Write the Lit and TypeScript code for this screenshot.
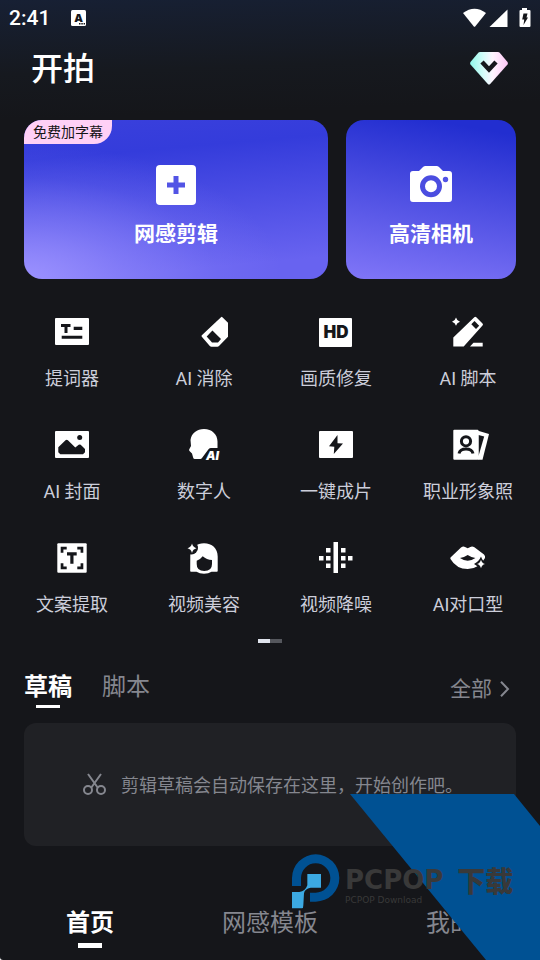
import { LitElement, html, css, svg } from "lit";
import { customElement, state } from "lit/decorators.js";
import { classMap } from "lit/directives/class-map.js";

const tools = [
  {
    label: "提词器",
    icon: svg`<rect x="1" y="4" width="34" height="27" rx="1"/>
      <path class="cut" d="M7 10h9.5v3h-3v6h-3v-6H7zM19.7 12.7h8.6V16h-8.6zM7.7 21.7h20.6v3H7.7z"/>`,
  },
  {
    label: "AI 消除",
    icon: svg`<path d="M35 3.2q.7-.7 1.4 0L42 8.7v14L33 32q-.7.7-1.6.7h-6q-.9 0-1.6-.7l-8-9.2q-.6-.8 0-1.6z"/>
      <path class="cut" d="M20.7 22.4l5.7-5.9 8.6 8.6-3 3.5h-6z"/>`,
  },
  {
    label: "画质修复",
    icon: svg`<rect x="1" y="4" width="33" height="29" rx="1"/>
      <text class="cut glyph" x="18" y="24" font-size="17" text-anchor="middle">HD</text>`,
  },
  {
    label: "AI 脚本",
    icon: svg`<path d="M6 3.6q.8 3.300 4 4.100-3.200.8-4 4.100-.8-3.300-4-4.100 3.200-.8 4-4.100z"/>
      <path d="M24.300 3.200q1-.9 2 0l6.200 6.200q1 1 0 2L13.700 32.500H3.300V23.600z"/>
      <path class="cut" d="M21.300 10.200l3.200-3.200 4.700 4.700-3.200 3.200z"/>
      <path d="M20 32.500l3.500-3.700h9.200v3.700z"/>`,
  },
  {
    label: "AI 封面",
    icon: svg`<rect x="1" y="4" width="34" height="27" rx="1"/>
      <circle class="cut" cx="25.700" cy="10.500" r="2.500"/>
      <path class="cut" d="M4.300 20.300l7.200-7q1.200-1 2.400 0l7.400 7.200 3.400-2.700q1-.7 2 0l4.300 4.200v3.300l-2 2H6.300l-2-2z"/>`,
  },
  {
    label: "数字人",
    icon: svg`<path d="M4.500 13C5.500 6 11 2 18 2c8 0 13.500 5.500 13.500 12.500V21h-6.500q-1.500 0-2.500 1.300L16 31q-.7.900-1.700.900H8.800q-1.300 0-1.600-1.200L6 26.500l-2.500-2.600q-.9-.9-.1-2L5 19z"/>
      <text class="glyph slant" x="20" y="33" font-size="12">AI</text>`,
  },
  {
    label: "一键成片",
    icon: svg`<rect x="1" y="4" width="34" height="27" rx="1"/>
      <path class="cut" d="M19.500 8L11 19.300l5.300.4-.5 7.300L25 16.600l-5.500-.3z"/>`,
  },
  {
    label: "职业形象照",
    icon: svg`<path d="M28 3.700L39 7 32.500 32.700H28z"/>
      <path class="cut" d="M28.500 8l5.700 1.600L28.500 29z"/>
      <rect x="3.300" y="2.700" width="25.200" height="30" rx="1"/>
      <circle class="cut-line" cx="16" cy="14.300" r="4.600"/>
      <path class="cut-line" d="M9 26.500q1-4.500 7-4.500t7 4.500"/>`,
  },
  {
    label: "文案提取",
    icon: svg`<rect x="3.300" y="3.300" width="29.400" height="29.400" rx="1"/>
      <path class="cut" d="M6.700 6.700h6v2.700H9.400v3.300H6.700zM29.300 6.700h-6v2.700h3.300v3.300h2.700zM6.700 29.300h6v-2.700H9.400v-3.300H6.700zM29.300 29.300h-6v-2.700h3.300v-3.300h2.700zM13 12.300h9.700v3.200h-3.200v8.200h-3.200v-8.200H13z"/>`,
  },
  {
    label: "视频美容",
    icon: svg`<path d="M4.300 15Q7 3.300 18 3.300c8 0 13.700 5.200 13.700 13.200V31q0 .8-.8.8h-5.400q-3 2-7.500 2t-7.500-2H5q-.8 0-.8-.8z"/>
      <path class="cut" d="M10.700 20.700q3.500-1 6-4.400 4 3.700 9.300 3.700v4q0 7-7.700 7t-7.600-7z"/>
      <circle class="cut" cx="5.500" cy="8" r="6.500"/>
      <path d="M6 3.500q.9 3.800 4.500 4.700Q6.900 9.100 6 12.900 5.100 9.100 1.500 8.200 5.100 7.300 6 3.500z"/>`,
  },
  {
    label: "视频降噪",
    icon: svg`<path d="M15.500 2H20v31h-4.500zM8 8h4.500v4.500H8zM8 16h4.500v4.500H8zM8 23.500h4.500V28H8zM23 8h4.500v4.500H23zM23 16h4.500v4.500H23zM23 23.500h4.500V28H23zM1 16h4.500v4.500H1zM30 16h4.500v4.500H30z"/>`,
  },
  {
    label: "AI对口型",
    icon: svg`<path d="M.5 17.500L11 7.600q2-1.500 4-.7l2.700 1.400 2.700-1.400q2-.8 4 .4L34 14.500q1.600 1.600 1 3.500-6 11-17.300 11T.5 19q-.4-.8 0-1.500z"/>
      <path class="cut" d="M10 18q4-.6 7.700-3 3.700 2.400 7.700 3-3.700 2.700-7.700 2.700T10 18z"/>
      <path class="cut" d="M31 16.500q1.500 5 6.500 7.500-5 2.500-6.500 8-2-5.500-7-8 5-2.500 7-7.500z"/>
      <path d="M31 19.700q.8 3.500 4 4.300-3.200.8-4 4.300-.8-3.500-4-4.300 3.200-.8 4-4.300z"/>`,
  },
];

@customElement("app-root")
export class AppRoot extends LitElement {
  @state() private listTab = 0;
  @state() private page = 0;

  static styles = css`
    :host {
      --ground: #15161a;
      --muted: #85878f;
      position: relative;
      display: flex;
      flex-direction: column;
      min-height: 100vh;
      overflow: hidden;
      border-bottom-left-radius: 3px;
      color: #fff;
      font-family: Roboto, "Noto Sans CJK SC", sans-serif;
      background: linear-gradient(178deg, #172034 0, #16191f 75px, var(--ground) 120px);
    }
    * { box-sizing: border-box; }
    button {
      margin: 0;
      padding: 0;
      border: 0;
      background: none;
      color: inherit;
      font: inherit;
      cursor: pointer;
    }
    svg { display: block; fill: #fff; overflow: visible; }
    .status {
      display: flex;
      align-items: center;
      height: 35px;
      padding: 0 9px;
      font-size: 21px;
      font-weight: 500;
    }
    .status .signals { margin-left: auto; }
    .status .keyboard { margin-left: 21px; }
    .header {
      display: flex;
      align-items: center;
      justify-content: space-between;
      height: 67px;
      padding: 0 32px 0 31px;
    }
    .brand {
      margin: 0;
      font-size: 32px;
      font-weight: 500;
      line-height: 48px;
    }
    .heroes {
      display: grid;
      grid-template-columns: 304fr 170fr;
      gap: 18px;
      padding: 18px 24px 0;
    }
    .hero {
      position: relative;
      display: flex;
      flex-direction: column;
      align-items: center;
      gap: 13px;
      padding: 45px 0 29px;
      border-radius: 18px;
      overflow: hidden;
      font-size: 21px;
      font-weight: 700;
      line-height: 32px;
    }
    .edit {
      background:
        radial-gradient(ellipse 85% 85% at 0 100%, #9c92ff, #9c92ff80 40%, #9c92ff22 75%, #9c92ff00),
        linear-gradient(175deg, #3a40dc, #343cdb 22%, #6863f0 88%);
    }
    .camera { background: linear-gradient(190deg, #222ed0 8%, #8176f8); }
    .badge {
      position: absolute;
      top: 0;
      left: 0;
      padding: 0 9px;
      border-bottom-right-radius: 18px;
      background: #ffd0f6;
      color: #151515;
      font-size: 14px;
      font-weight: 400;
      line-height: 24px;
    }
    .violet { fill: #5254e5; }
    .violet-line { fill: none; stroke: #4b4de0; stroke-width: 5; }
    .tools {
      display: grid;
      grid-template-columns: repeat(4, 1fr);
      row-gap: 36px;
      padding: 35px 6px 0;
    }
    .tool {
      display: flex;
      flex-direction: column;
      align-items: center;
      gap: 17px;
      color: #ccceda;
      font-size: 18px;
      line-height: 24px;
      white-space: nowrap;
    }
    .cut { fill: var(--ground); }
    .cut-line { fill: none; stroke: var(--ground); stroke-width: 3; }
    .glyph { font-family: Inter, sans-serif; font-weight: 900; }
    .slant { font-style: italic; }
    .pager {
      width: 24px;
      height: 4px;
      margin: 22px auto 0;
      background: linear-gradient(90deg, #dfe3ec 50%, #55575d 50%);
    }
    .lists {
      display: flex;
      align-items: center;
      gap: 30px;
      padding: 26px 24px 0;
      font-size: 24px;
      line-height: 36px;
    }
    .tab {
      display: flex;
      flex-direction: column;
      align-items: center;
      color: var(--muted);
    }
    .tab::after {
      content: "";
      width: 24px;
      height: 3px;
    }
    .tab.on { color: #fff; font-weight: 700; }
    .tab.on::after { background: #fff; }
    .all {
      display: flex;
      align-items: center;
      gap: 8px;
      margin-left: auto;
      padding-right: 7px;
      color: var(--muted);
      font-size: 21px;
    }
    .stroke { fill: none; stroke: var(--muted); stroke-width: 2; }
    .empty {
      display: flex;
      align-items: center;
      justify-content: center;
      gap: 15px;
      height: 123px;
      margin: 15px 24px 0;
      padding: 0 0 2px 6px;
      border-radius: 12px;
      background: #202125;
      color: var(--muted);
      font-size: 18px;
    }
    .empty p { margin: 0; }
    .nav {
      display: grid;
      grid-template-columns: repeat(3, 1fr);
      margin-top: auto;
      padding: 24px 0 12px;
      font-size: 24px;
      line-height: 36px;
    }
    .nav .tab { gap: 2px; }
    .nav .tab::after { height: 5px; }
    .mark {
      position: absolute;
      right: 0;
      bottom: 0;
      display: flex;
      align-items: flex-start;
      gap: 5px;
      width: 250px;
      height: 166px;
      padding-top: 58px;
      pointer-events: none;
    }
    .band {
      position: absolute;
      right: 0;
      bottom: 0;
      fill: #005193;
    }
    .logo { position: relative; }
    .words {
      position: relative;
      padding-top: 14px;
      color: #393939;
      white-space: nowrap;
    }
    .title {
      display: flex;
      gap: 14px;
      font: 700 26px/28px "DejaVu Sans", sans-serif;
    }
    .title .cjk {
      font-family: "Noto Sans CJK SC", sans-serif;
      font-size: 28px;
      font-weight: 900;
    }
    .sub {
      margin-top: 1px;
      font: 9px/10px "DejaVu Sans", sans-serif;
    }
    .deep { fill: #005193; }
    .sky { fill: #3ca9e2; }
  `;

  private tab(label: string, index: number, current: number, pick: () => void) {
    return html`<button class=${classMap({ tab: true, on: index === current })} @click=${pick}>${label}</button>`;
  }

  render() {
    return html`
      <div class="status">
        <span>2:41</span>
        <svg class="keyboard" width="15" height="16" viewBox="0 0 15 16">
          <rect width="15" height="16" rx="1.500"/>
          <text class="cut glyph" x="7.500" y="12" font-size="11" text-anchor="middle">A</text>
          <path class="cut" d="M8 13h1.500v1.500H8zM10.300 13h1.500v1.500h-1.500zM12.600 13H14v1.500h-1.400z"/>
        </svg>
        <svg class="signals" width="68" height="20" viewBox="0 0 68 20">
          <path d="M0 5Q11.500-3.500 23 5L12.200 18.400q-.7.800-1.400 0z"/>
          <path d="M44.500 1.500V19H26.500z"/>
          <path d="M59 0h5v2h2.500q1 0 1 1v15q0 1-1 1h-9q-1 0-1-1V3q0-1 1-1H59z"/>
          <path class="cut" d="M60.500 5.500h4l-1 4H65l-4.500 7.500.7-5.500h-2z"/>
        </svg>
      </div>

      <header class="header">
        <h1 class="brand">开拍</h1>
        <button aria-label="会员">
          <svg width="38" height="34" viewBox="0 0 38 34">
            <defs>
              <linearGradient id="gem" x1="0" x2="1">
                <stop offset="0" stop-color="#8ff8ea"/>
                <stop offset=".35" stop-color="#d4fcf9"/>
                <stop offset=".6" stop-color="#fff5ff"/>
                <stop offset="1" stop-color="#ffc8f7"/>
              </linearGradient>
            </defs>
            <path fill="url(#gem)" d="M10 0h18q1 0 1.700.7l7.800 9.300q.9 1.200 0 2.400L20.200 32q-1.200 1-2.400 0L.5 12.400q-.9-1.200 0-2.400L8.300.7Q9 0 10 0z"/>
            <path fill="none" stroke="#16181d" stroke-width="4.500" d="M12 10l7 7.500 7-7.500"/>
          </svg>
        </button>
      </header>

      <section class="heroes">
        <button class="hero edit">
          <span class="badge">免费加字幕</span>
          <svg width="40" height="40" viewBox="0 0 40 40">
            <rect width="40" height="40" rx="4"/>
            <path class="violet" d="M17.500 11h5v6.500H29v5h-6.500V29h-5v-6.500H11v-5h6.500z"/>
          </svg>
          <span>网感剪辑</span>
        </button>
        <button class="hero camera">
          <svg width="42" height="40" viewBox="0 0 42 40">
            <path d="M3 6h6l4-4q1-1 2.500-1h11Q28 1 29 2l4 4h6q3 0 3 3v25q0 3-3 3H3q-3 0-3-3V9q0-3 3-3z"/>
            <circle class="violet-line" cx="21" cy="21.300" r="8.500"/>
            <circle class="violet" cx="35.500" cy="14.500" r="2.700"/>
          </svg>
          <span>高清相机</span>
        </button>
      </section>

      <section class="tools">
        ${tools.map(
          (tool) => html`<button class="tool">
            <svg width="36" height="36" viewBox="0 0 36 36">${tool.icon}</svg>
            <span>${tool.label}</span>
          </button>`,
        )}
      </section>
      <div class="pager"></div>

      <div class="lists">
        ${["草稿", "脚本"].map((label, i) => this.tab(label, i, this.listTab, () => (this.listTab = i)))}
        <button class="all">
          全部
          <svg width="9" height="16" viewBox="0 0 9 16"><path class="stroke" d="M1 .7L8 8l-7 7.300"/></svg>
        </button>
      </div>
      <div class="empty">
        <svg width="23" height="22" viewBox="0 0 23 22">
          <path class="stroke" d="M5 1l10 14M18 1L8 15"/>
          <circle class="stroke" cx="5" cy="17" r="4"/>
          <circle class="stroke" cx="18" cy="17" r="4"/>
        </svg>
        <p>剪辑草稿会自动保存在这里，开始创作吧。</p>
      </div>

      <nav class="nav">
        ${["首页", "网感模板", "我的"].map((label, i) => this.tab(label, i, this.page, () => (this.page = i)))}
      </nav>

      <div class="mark">
        <svg class="band" width="190" height="166" viewBox="0 0 190 166">
          <path d="M0 0h164l26 32v134h-54z"/>
        </svg>
        <svg class="logo" width="50" height="57" viewBox="0 0 150 171">
          <path class="deep" d="M6 102V78a71 71 0 1 1 71 71H60v-27h17a44 44 0 1 0-44-44v24z"/>
          <path class="sky" d="M52 66h41v41H62q-18 3-20 17l-2 36q0 9-4 9H6v-49h22q18-2 24-20z"/>
        </svg>
        <div class="words">
          <div class="title"><span>PCPOP</span><span class="cjk">下载</span></div>
          <div class="sub">PCPOP Download</div>
        </div>
      </div>
    `;
  }
}
